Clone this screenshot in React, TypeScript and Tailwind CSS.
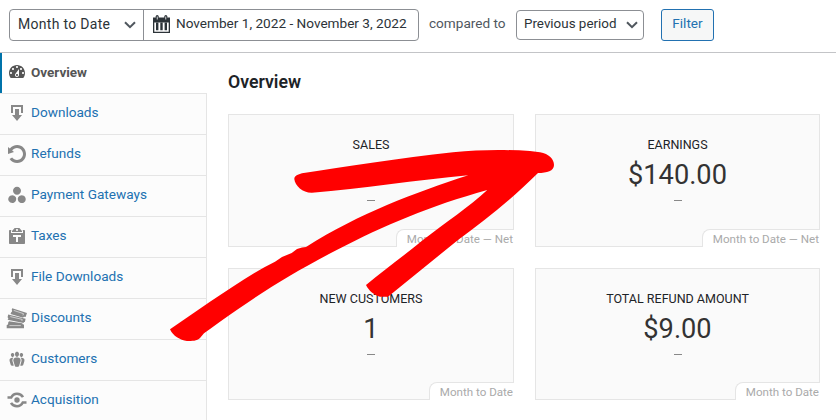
import type { ReactNode } from 'react';

interface NavItem {
  label: string;
  icon: ReactNode;
  active?: boolean;
}

interface Tile {
  title: string;
  value: string;
  period: string;
}

function Glyph({ d, className = '' }: { d: string; className?: string }) {
  return (
    <svg viewBox="0 0 20 20" className={`w-5 h-5 shrink-0 fill-current ${className}`} aria-hidden="true">
      <path d={d} />
    </svg>
  );
}

const DOWNLOAD = 'M14.01 4v6h2V2H4v8h2.01V4h8zm-2 2v6h3l-5 6-5-6h3V6h4z';
const DASHBOARD =
  'M3.76 16h12.48c1.1-1.37 1.76-3.11 1.76-5 0-4.42-3.58-8-8-8s-8 3.58-8 8c0 1.89.66 3.63 1.76 5zM10 4c.55 0 1 .45 1 1s-.45 1-1 1-1-.45-1-1 .45-1 1-1zM6 6c.55 0 1 .45 1 1s-.45 1-1 1-1-.45-1-1 .45-1 1-1zm8 0c.55 0 1 .45 1 1s-.45 1-1 1-1-.45-1-1 .45-1 1-1zm-5.37 5.55L12 7v6c0 1.1-.9 2-2 2s-2-.9-2-2c0-.57.24-1.08.63-1.45zM4 10c.55 0 1 .45 1 1s-.45 1-1 1-1-.45-1-1 .45-1 1-1zm12 0c.55 0 1 .45 1 1s-.45 1-1 1-1-.45-1-1 .45-1 1-1zm-5 3c0-.55-.45-1-1-1s-1 .45-1 1 .45 1 1 1 1-.45 1-1z';
const ROTATE =
  'M10.25 1.02c5.1 0 8.75 4.04 8.75 9s-3.65 9-8.75 9c-3.2 0-6.02-1.59-7.68-3.99l2.59-1.52c1.1 1.5 2.86 2.51 4.84 2.51 3.3 0 6-2.79 6-6s-2.7-6-6-6c-1.97 0-3.72 1-4.82 2.49L7 8.02l-6 2v-7L2.89 4.6c1.69-2.17 4.36-3.58 7.36-3.58z';
const FILTER =
  'M14 5.87c0-2.2-1.79-4-4-4s-4 1.8-4 4c0 2.21 1.79 4 4 4s4-1.79 4-4zM3.24 10.66c-1.92 1.1-2.57 3.55-1.47 5.46 1.11 1.92 3.55 2.57 5.47 1.47 1.91-1.11 2.57-3.55 1.46-5.47-1.1-1.91-3.55-2.56-5.46-1.46zm9.52 6.93c1.92 1.1 4.36.45 5.47-1.46 1.1-1.92.45-4.36-1.47-5.47-1.91-1.1-4.36-.45-5.46 1.46-1.11 1.92-.45 4.36 1.46 5.47z';
const PASTE =
  'M12.38 2L15 5v1H5V5l2.64-3h4.74zM10 5c.55 0 1-.44 1-1 0-.55-.45-1-1-1s-1 .45-1 1c0 .56.45 1 1 1zm5.45-1H17c.55 0 1 .45 1 1v12c0 .56-.45 1-1 1H3c-.55 0-1-.44-1-1V5c0-.55.45-1 1-1h1.55L4 4.63V7h12V4.63zM14 11V9H6v2h3v5h2v-5h3z';
const GROUPS =
  'M8.03 4.46c-.29 1.28.55 3.46 1.97 3.46 1.41 0 2.25-2.18 1.96-3.46-.22-.98-1.08-1.63-1.96-1.63-.89 0-1.74.65-1.97 1.63zm-4.13.9c-.25 1.08.47 2.93 1.67 2.93s1.92-1.85 1.67-2.93c-.19-.83-.92-1.39-1.67-1.39s-1.48.56-1.67 1.39zm8.86 0c-.25 1.08.47 2.93 1.66 2.93 1.2 0 1.92-1.85 1.67-2.93-.19-.83-.92-1.39-1.67-1.39-.74 0-1.47.56-1.66 1.39zm-.59 11.43l1.25-4.3C14.2 10 12.71 8.47 10 8.47c-2.72 0-4.21 1.53-3.44 4.02l1.26 4.3C8.05 17.51 9 18 10 18c.98 0 1.94-.49 2.17-1.21zm-6.1-7.63c-.49.67-.96 1.83-.42 3.59l1.12 3.79c-.34.2-.77.31-1.2.31-.85 0-1.65-.41-1.85-1.03l-1.07-3.65c-.65-2.11.61-3.4 2.92-3.4.27 0 .54.02.79.06-.1.1-.2.22-.29.33zm8.35-.39c2.31 0 3.58 1.29 2.92 3.4l-1.07 3.65c-.2.62-1 1.03-1.85 1.03-.43 0-.86-.11-1.2-.31l1.11-3.77c.55-1.78.08-2.94-.42-3.61-.08-.11-.18-.23-.28-.33.25-.04.51-.06.79-.06z';

function CalendarIcon() {
  return (
    <svg viewBox="0 0 17 18" className="w-[17px] h-[18px] shrink-0 fill-current" aria-hidden="true">
      <path fillRule="evenodd" d="M0 2.500h17V18H0zM1.300 7.500v9.200h14.400V7.500z" />
      <path d="M3 7.500h2.400v7.800H3zM7.300 7.500h2.400v7.800H7.300zM11.600 7.500H14v7.800h-2.400z" />
      <rect x="2.700" y="0" width="3" height="5" rx="1.500" />
      <rect x="11.300" y="0" width="3" height="5" rx="1.500" />
      <path className="fill-white" d="M3.800 1.500h.8v3h-.8zM12.400 1.500h.8v3h-.8z" />
    </svg>
  );
}

function TicketsIcon() {
  return (
    <svg viewBox="0 0 20 20" className="w-5 h-5 shrink-0 overflow-visible fill-current" aria-hidden="true">
      <path d="M5.200.2L20 5.100l-1.400 4-.8-.2c-.9-.2-1.600.2-1.700.8L3.500 6l.9-2c.8-.3 1-1.400.3-2z" />
      <path d="M1.200 6.600l17.400 4.100-.7 3.200c-.9 0-1.400.5-1.300 1.100L.5 11.800c.9-.5 1.100-1.800.1-2.600z" />
      <path d="M2 13.300l13.400 2c-.1.700.5 1.200 1.600 1.300v3.600H-.300v-3.300c1.300 0 1.900-1.100 1.300-2z" />
      <path
        d="M6.700 2.400l9.800 3.300-.6 1.700M3.300 8.600l11.900 2.800-.3 1.500M2.400 17.600h11.400"
        className="fill-none stroke-[#fcfcfc]"
        strokeWidth=".6"
      />
    </svg>
  );
}

function AcquisitionIcon() {
  return (
    <svg viewBox="0 0 20 20" className="w-5 h-5 shrink-0 overflow-visible" aria-hidden="true">
      <circle cx="10" cy="10" r="2.700" className="fill-current" />
      <path d="M.5 7.500h3.700C5.500 5 7.500 3.800 10 3.800c2.700 0 4.700 1.200 6 3.400" className="fill-none stroke-current" strokeWidth="2.600" />
      <path d="M19.500 12.500h-3.700C14.500 15 12.500 16.200 10 16.200c-2.700 0-4.700-1.200-6-3.400" className="fill-none stroke-current" strokeWidth="2.600" />
    </svg>
  );
}

const navItems: NavItem[] = [
  { label: 'Overview', icon: <Glyph d={DASHBOARD} />, active: true },
  { label: 'Downloads', icon: <Glyph d={DOWNLOAD} /> },
  { label: 'Refunds', icon: <Glyph d={ROTATE} /> },
  { label: 'Payment Gateways', icon: <Glyph d={FILTER} /> },
  { label: 'Taxes', icon: <Glyph d={PASTE} /> },
  { label: 'File Downloads', icon: <Glyph d={DOWNLOAD} /> },
  { label: 'Discounts', icon: <TicketsIcon /> },
  { label: 'Customers', icon: <Glyph d={GROUPS} /> },
  { label: 'Acquisition', icon: <AcquisitionIcon /> },
];

const tiles: Tile[] = [
  { title: 'Sales', value: '1', period: 'Month to Date — Net' },
  { title: 'Earnings', value: '$140.00', period: 'Month to Date — Net' },
  { title: 'New Customers', value: '1', period: 'Month to Date' },
  { title: 'Total Refund Amount', value: '$9.00', period: 'Month to Date' },
];

function Chevron() {
  return (
    <svg viewBox="0 0 12 8" className="w-3 h-2 shrink-0 fill-none stroke-[#50575e]" aria-hidden="true">
      <path d="M1 1.200l5 5 5-5" strokeWidth="2" />
    </svg>
  );
}

function FilterBar() {
  return (
    <header className="flex items-start h-[53px] pt-[9px] pl-[9px] border-b border-[#c3c4c7] text-[13.6px] whitespace-nowrap text-[#2c3338]">
      <div className="flex h-8 w-[410px] shrink-0 rounded border border-[#8c8f94]">
        <button className="flex items-center justify-between w-[134px] shrink-0 pl-2 pr-[7px] border-r border-[#8c8f94]">
          <span className="pb-0.5 text-sm tracking-[0.3px]">Month to Date</span>
          <Chevron />
        </button>
        <div className="flex items-start pl-[9px] pt-[5px]">
          <CalendarIcon />
          <span className="ml-[6px] -mt-0.5 leading-5">November 1, 2022 - November 3, 2022</span>
        </div>
      </div>
      <span className="w-[77px] ml-[10px] mt-1 leading-5 text-[#50575e]">compared to</span>
      <button className="flex items-center justify-between h-[30px] w-32 shrink-0 ml-[10px] mt-px pl-[7px] pr-[5px] rounded border border-[#8c8f94]">
        <span className="pb-0.5 text-[13.4px]">Previous period</span>
        <Chevron />
      </button>
      <button className="h-8 w-[53px] shrink-0 ml-[17px] pb-[3px] rounded-[3px] border border-[#2271b1] bg-[#f6f7f7] text-[#2271b1]">
        Filter
      </button>
    </header>
  );
}

function Sidebar() {
  return (
    <nav className="w-[207px] h-[367px] shrink-0 overflow-hidden text-[13.6px]">
      {navItems.map((item) =>
        item.active ? (
          <a key={item.label} className="flex h-10 pl-[5px] pt-[9px] border-l-2 border-[#0073aa] font-bold text-[#555]">
            {item.icon}
            <span className="ml-1 leading-5 text-[13.5px]">{item.label}</span>
          </a>
        ) : (
          <a key={item.label} className="flex h-[41px] pl-[7px] pt-[9px] border-t border-r border-[#e5e5e5] bg-[#fcfcfc]">
            <span className="text-[#888]">{item.icon}</span>
            <span className="-mt-px ml-1 leading-5 text-[#2271b1]">{item.label}</span>
          </a>
        ),
      )}
    </nav>
  );
}

function TileCard({ tile }: { tile: Tile }) {
  return (
    <article className="relative flex flex-col items-center pt-5 border border-[#e5e5e5] bg-[#fafafa]">
      <h3 className="text-[12.5px] leading-5 uppercase text-[#1d2327]">{tile.title}</h3>
      <p className="mt-1 text-[27.2px] leading-8 text-[#333]">{tile.value}</p>
      <span className="mt-[9px] w-2 h-px bg-[#888]" />
      <span className="absolute -right-px -bottom-px h-[18px] pl-[10px] pr-px rounded-tl-lg border-t border-l border-[#e5e5e5] bg-white text-[11.6px] leading-[19px] text-[#aaa]">
        {tile.period}
      </span>
    </article>
  );
}

// Hand-drawn pointer from the lower left up to the earnings tile
function Arrow() {
  return (
    <svg viewBox="0 0 836 420" className="absolute inset-0 w-[836px] h-[420px] pointer-events-none fill-[#ff0000]" aria-hidden="true">
      <path d="M294.300 179C294.500 175.500 298 174.300 302 173.200C345 167 400 158 453 152.300C480 149.500 505 149.500 530 151L540 152.300C549 154 554 159 554 165C554 171 547 173 538 173C513 198 484 221 458 240L388 296.700H380C374 295 369 291 366 285C385 269 405 255 423 240C446 222 469 207 487.300 190C430 206 385 225 336.700 250C292 273 259 294 220 321.700L210 329L204 333.300L200 338C197 341 192 341 187 341C180 340 173 336 170 329.300L210 301.700C231 288 252 273 275 261.700L282 257L291.700 253L297 249L302 247.500L306 247C360 213 414 193 468.300 175.300C416 180 362 189 312 192.700C303 193 295 186 294.300 179Z" />
    </svg>
  );
}

export default function App() {
  return (
    <div className="relative w-[836px] h-[420px] overflow-hidden bg-white font-['Roboto',sans-serif]">
      <FilterBar />
      <div className="flex">
        <Sidebar />
        <main className="pl-[21px] pt-[19px]">
          <h2 className="text-[17.7px] leading-5 font-semibold text-[#1d2327]">Overview</h2>
          <div className="grid grid-cols-[286px_285px] grid-rows-[133px_132px] gap-[21px] mt-[22px]">
            {tiles.map((tile) => (
              <TileCard key={tile.title} tile={tile} />
            ))}
          </div>
        </main>
      </div>
      <Arrow />
    </div>
  );
}
